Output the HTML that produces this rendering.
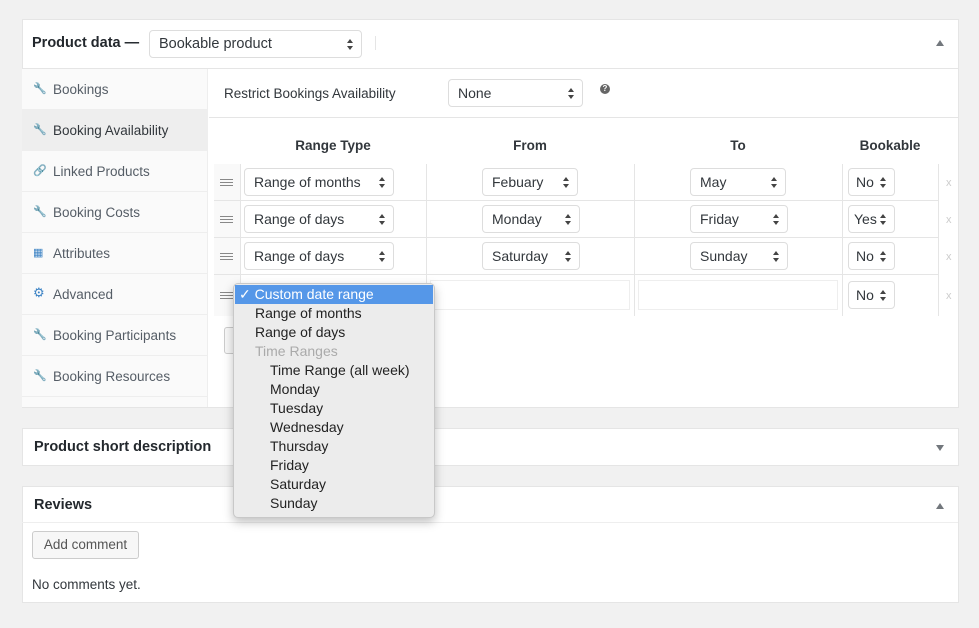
<!DOCTYPE html>
<html><head><meta charset="utf-8"><style>
*{box-sizing:border-box;margin:0;padding:0}
body{width:979px;height:628px;background:#f1f1f1;font-family:"Liberation Sans",sans-serif;color:#32373c;position:relative;overflow:hidden;font-size:13px}
.abs{position:absolute}
.panel{position:absolute;background:#fff;border:1px solid #e5e5e5}
.sel{position:absolute;border:1px solid #ddd;border-radius:4px;background:#fff;height:28px;font-size:14px;color:#32373c;padding:5px 0 0 9px;white-space:nowrap}
.sel:after{content:"";position:absolute;right:8px;top:8px;border-left:3.5px solid transparent;border-right:3.5px solid transparent;border-bottom:4px solid #444}
.sel:before{content:"";position:absolute;right:8px;top:15px;border-left:3.5px solid transparent;border-right:3.5px solid transparent;border-top:4px solid #444}
.sm{padding-left:7px}
.nav{position:absolute;left:22px;width:186px;height:41px;border-bottom:1px solid #eee;color:#555d66;font-size:13.5px;padding:13px 0 0 31px}
.nav i{position:absolute;left:11px;top:13px;font-style:normal;color:#666;font-size:11px}
.th{position:absolute;top:138px;font-weight:bold;font-size:13.5px;color:#32373c;text-align:center}
.vl{position:absolute;width:1px;background:#e5e5e5}
.hl{position:absolute;height:1px;background:#e5e5e5}
.hand{position:absolute;left:220px;width:13px;height:1px;background:#888;box-shadow:0 3px 0 #888,0 6px 0 #888}
.x{position:absolute;left:946px;color:#ccc;font-size:11px}
.dd{position:absolute;left:233px;top:283px;width:202px;height:235px;background:#ececec;border:1px solid #c8c8c8;border-radius:5px;box-shadow:0 4px 10px rgba(0,0,0,.25);font-size:14px;color:#222}
.dd div{position:absolute;left:21px;height:19px;line-height:19px;white-space:nowrap}
</style></head><body>

<div class="panel" style="left:22px;top:19px;width:937px;height:389px"></div>
<div class="abs" style="left:32px;top:35px;font-weight:bold;font-size:14.5px;color:#23282d">Product data —</div>
<div class="sel" style="left:149px;top:30px;width:213px;height:28px;font-size:14.5px;padding-top:5px">Bookable product</div>
<div class="vl" style="left:375px;top:36px;height:14px"></div>
<div class="abs" style="left:936px;top:40px;border-left:4px solid transparent;border-right:4px solid transparent;border-bottom:6px solid #72777c"></div>
<div class="hl" style="left:22px;top:68px;width:936px"></div>

<div class="abs" style="left:22px;top:69px;width:186px;height:338px;background:#fafafa;border-right:1px solid #eee"></div>
<div class="nav" style="top:69px"><i>&#x1F527;</i>Bookings</div>
<div class="nav" style="top:110px;background:#eee;color:#32373c"><i>&#x1F527;</i>Booking Availability</div>
<div class="nav" style="top:151px"><i>&#x1F517;</i>Linked Products</div>
<div class="nav" style="top:192px"><i style="color:#3b82c4">&#x1F527;</i>Booking Costs</div>
<div class="nav" style="top:233px"><i style="color:#3b82c4">&#x25A6;</i>Attributes</div>
<div class="nav" style="top:274px"><i style="color:#3b82c4;font-size:13px;top:11px">&#x2699;</i>Advanced</div>
<div class="nav" style="top:315px"><i style="color:#3b82c4">&#x1F527;</i>Booking Participants</div>
<div class="nav" style="top:356px"><i style="color:#3b82c4">&#x1F527;</i>Booking Resources</div>

<div class="abs" style="left:224px;top:86px;font-size:13.5px;color:#32373c">Restrict Bookings Availability</div>
<div class="sel" style="left:448px;top:79px;width:135px">None</div>
<div class="abs" style="left:600px;top:84px;width:10px;height:10px;border-radius:50%;background:#666;color:#fff;font-size:8px;text-align:center;line-height:10px;font-weight:bold">?</div>
<div class="hl" style="left:209px;top:117px;width:749px"></div>

<div class="th" style="left:240px;width:186px">Range Type</div>
<div class="th" style="left:426px;width:208px">From</div>
<div class="th" style="left:634px;width:208px">To</div>
<div class="th" style="left:842px;width:96px">Bookable</div>

<div class="abs" style="left:214px;top:164px;width:26px;height:152px;background:#f9f9f9"></div>
<div class="vl" style="left:240px;top:164px;height:152px"></div>
<div class="vl" style="left:426px;top:164px;height:152px"></div>
<div class="vl" style="left:634px;top:164px;height:152px"></div>
<div class="vl" style="left:842px;top:164px;height:152px"></div>
<div class="vl" style="left:938px;top:164px;height:152px"></div>
<div class="hl" style="left:214px;top:200px;width:724px"></div>
<div class="hl" style="left:214px;top:237px;width:724px"></div>
<div class="hl" style="left:214px;top:274px;width:724px"></div>

<div class="hand" style="top:179px"></div>
<div class="hand" style="top:216px"></div>
<div class="hand" style="top:253px"></div>
<div class="hand" style="top:292px"></div>

<div class="sel" style="left:244px;top:168px;width:150px">Range of months</div>
<div class="sel" style="left:482px;top:168px;width:96px">Febuary</div>
<div class="sel" style="left:690px;top:168px;width:96px">May</div>
<div class="sel sm" style="left:848px;top:168px;width:47px">No</div>
<div class="x" style="top:177px">x</div>

<div class="sel" style="left:244px;top:205px;width:150px">Range of days</div>
<div class="sel" style="left:482px;top:205px;width:98px">Monday</div>
<div class="sel" style="left:690px;top:205px;width:98px">Friday</div>
<div class="sel sm" style="left:848px;top:205px;width:47px;padding-left:5px">Yes</div>
<div class="x" style="top:214px">x</div>

<div class="sel" style="left:244px;top:242px;width:150px">Range of days</div>
<div class="sel" style="left:482px;top:242px;width:98px">Saturday</div>
<div class="sel" style="left:690px;top:242px;width:98px">Sunday</div>
<div class="sel sm" style="left:848px;top:242px;width:47px">No</div>
<div class="x" style="top:251px">x</div>

<div class="abs" style="left:430px;top:280px;width:200px;height:30px;border:1px solid #eee"></div>
<div class="abs" style="left:638px;top:280px;width:200px;height:30px;border:1px solid #eee"></div>
<div class="sel sm" style="left:848px;top:281px;width:47px">No</div>
<div class="x" style="top:290px">x</div>

<div class="abs" style="left:224px;top:327px;width:30px;height:27px;border:1px solid #ccc;border-radius:3px;background:#f7f7f7"></div>

<div class="panel" style="left:22px;top:428px;width:937px;height:38px"></div>
<div class="abs" style="left:34px;top:439px;font-weight:bold;font-size:14.5px;color:#23282d">Product short description</div>
<div class="abs" style="left:936px;top:445px;border-left:4px solid transparent;border-right:4px solid transparent;border-top:6px solid #72777c"></div>

<div class="panel" style="left:22px;top:486px;width:937px;height:117px"></div>
<div class="abs" style="left:34px;top:497px;font-weight:bold;font-size:14.5px;color:#23282d">Reviews</div>
<div class="abs" style="left:936px;top:503px;border-left:4px solid transparent;border-right:4px solid transparent;border-bottom:6px solid #72777c"></div>
<div class="hl" style="left:22px;top:522px;width:936px;background:#eee"></div>
<div class="abs" style="left:32px;top:531px;width:107px;height:28px;border:1px solid #ccc;border-radius:3px;background:#f7f7f7;font-size:13.5px;color:#555;text-align:center;line-height:26px">Add comment</div>
<div class="abs" style="left:32px;top:577px;font-size:13.5px;color:#32373c">No comments yet.</div>

<div class="dd">
<div style="left:1px;top:1px;width:198px;height:19px;background:#5597e8;color:#fff;padding-left:4px">&#10003; Custom date range</div>
<div style="top:20px">Range of months</div>
<div style="top:39px">Range of days</div>
<div style="top:58px;color:#aaa">Time Ranges</div>
<div style="top:77px;left:36px">Time Range (all week)</div>
<div style="top:96px;left:36px">Monday</div>
<div style="top:115px;left:36px">Tuesday</div>
<div style="top:134px;left:36px">Wednesday</div>
<div style="top:153px;left:36px">Thursday</div>
<div style="top:172px;left:36px">Friday</div>
<div style="top:191px;left:36px">Saturday</div>
<div style="top:210px;left:36px">Sunday</div>
</div>
</body></html>
